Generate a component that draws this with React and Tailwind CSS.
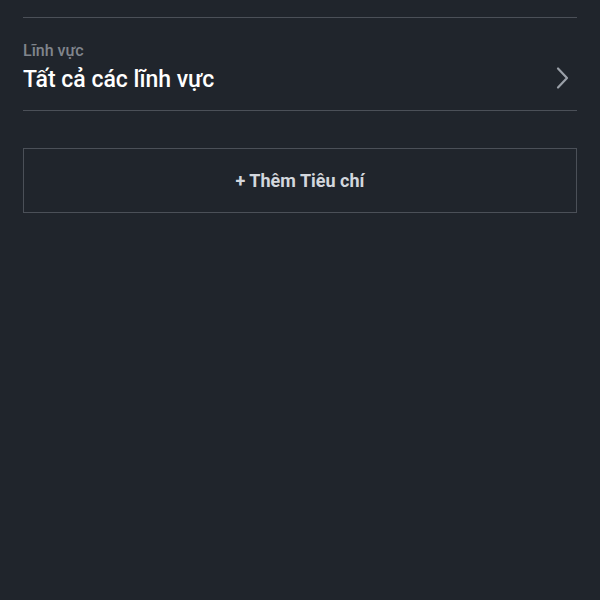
import React from 'react';

const ChevronRight = () => (
  <svg width="16" height="24" viewBox="0 0 16 24" fill="none" stroke="#9aa0a8" strokeWidth="2.2" strokeLinecap="round" strokeLinejoin="round">
    <path d="M3 2.5l9 9.5-9 9.5" />
  </svg>
);

export default function App() {
  return (
    <div className="w-[600px] h-[600px] bg-[#20252c] px-[23px] pt-[17px]" style={{ fontFamily: 'Roboto, "Noto Sans", sans-serif' }}>
      {/* field row */}
      <div className="border-t border-b border-[#4b5058]">
        <div className="flex items-center justify-between pt-[23px] pb-[15px]">
          <div className="flex flex-col">
            <span className="text-[16px] leading-[19px] text-[#80858c] font-medium">Lĩnh vực</span>
            <span className="text-[23px] leading-[30px] text-white font-medium mt-[5px]">Tất cả các lĩnh vực</span>
          </div>
          <div className="pr-[6px] pt-[20px]">
            <ChevronRight />
          </div>
        </div>
      </div>

      {/* add criteria button */}
      <button className="mt-[37px] w-full h-[65px] border border-[#4b5058] flex items-center justify-center text-[18px] font-bold text-[#d3d7dd]">
        + Thêm Tiêu chí
      </button>
    </div>
  );
}
